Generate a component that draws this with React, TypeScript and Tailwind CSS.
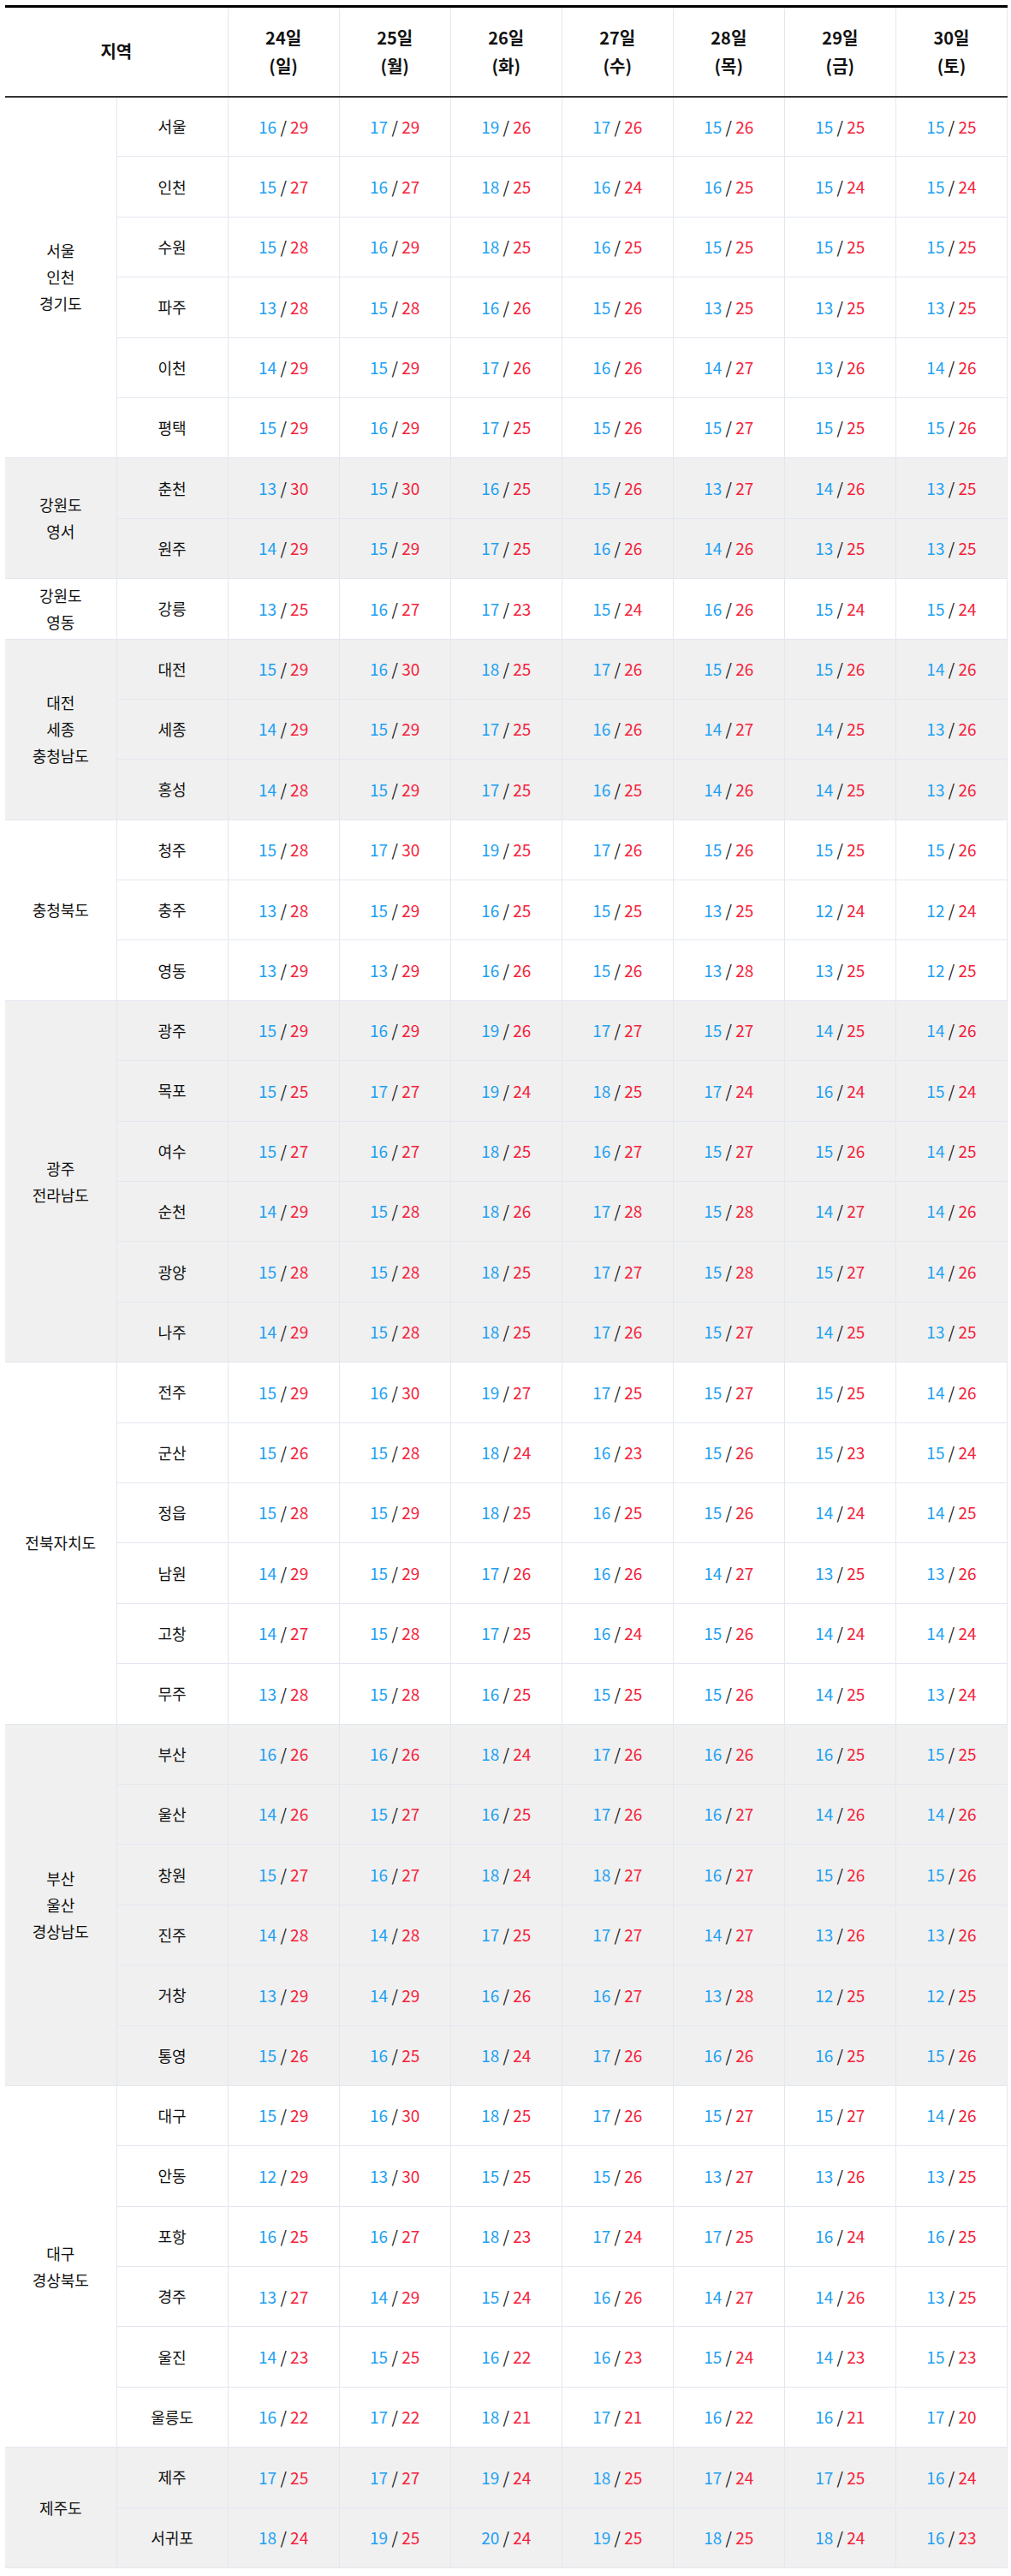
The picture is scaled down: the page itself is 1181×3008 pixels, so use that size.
import React from 'react'

type City = { name: string; temps: [number, number][] }
type Group = { region: string[]; cities: City[] }

const DAYS = [
  { date: '24일', dow: '(일)' },
  { date: '25일', dow: '(월)' },
  { date: '26일', dow: '(화)' },
  { date: '27일', dow: '(수)' },
  { date: '28일', dow: '(목)' },
  { date: '29일', dow: '(금)' },
  { date: '30일', dow: '(토)' },
]

// "16/29 17/29 ..." -> [[16,29],[17,29],...]
function t(s: string): [number, number][] {
  return s.split(' ').map((p) => {
    const [lo, hi] = p.split('/')
    return [Number(lo), Number(hi)]
  })
}

const GROUPS: Group[] = [
  {
    region: ['서울', '인천', '경기도'],
    cities: [
      { name: '서울', temps: t('16/29 17/29 19/26 17/26 15/26 15/25 15/25') },
      { name: '인천', temps: t('15/27 16/27 18/25 16/24 16/25 15/24 15/24') },
      { name: '수원', temps: t('15/28 16/29 18/25 16/25 15/25 15/25 15/25') },
      { name: '파주', temps: t('13/28 15/28 16/26 15/26 13/25 13/25 13/25') },
      { name: '이천', temps: t('14/29 15/29 17/26 16/26 14/27 13/26 14/26') },
      { name: '평택', temps: t('15/29 16/29 17/25 15/26 15/27 15/25 15/26') },
    ],
  },
  {
    region: ['강원도', '영서'],
    cities: [
      { name: '춘천', temps: t('13/30 15/30 16/25 15/26 13/27 14/26 13/25') },
      { name: '원주', temps: t('14/29 15/29 17/25 16/26 14/26 13/25 13/25') },
    ],
  },
  {
    region: ['강원도', '영동'],
    cities: [{ name: '강릉', temps: t('13/25 16/27 17/23 15/24 16/26 15/24 15/24') }],
  },
  {
    region: ['대전', '세종', '충청남도'],
    cities: [
      { name: '대전', temps: t('15/29 16/30 18/25 17/26 15/26 15/26 14/26') },
      { name: '세종', temps: t('14/29 15/29 17/25 16/26 14/27 14/25 13/26') },
      { name: '홍성', temps: t('14/28 15/29 17/25 16/25 14/26 14/25 13/26') },
    ],
  },
  {
    region: ['충청북도'],
    cities: [
      { name: '청주', temps: t('15/28 17/30 19/25 17/26 15/26 15/25 15/26') },
      { name: '충주', temps: t('13/28 15/29 16/25 15/25 13/25 12/24 12/24') },
      { name: '영동', temps: t('13/29 13/29 16/26 15/26 13/28 13/25 12/25') },
    ],
  },
  {
    region: ['광주', '전라남도'],
    cities: [
      { name: '광주', temps: t('15/29 16/29 19/26 17/27 15/27 14/25 14/26') },
      { name: '목포', temps: t('15/25 17/27 19/24 18/25 17/24 16/24 15/24') },
      { name: '여수', temps: t('15/27 16/27 18/25 16/27 15/27 15/26 14/25') },
      { name: '순천', temps: t('14/29 15/28 18/26 17/28 15/28 14/27 14/26') },
      { name: '광양', temps: t('15/28 15/28 18/25 17/27 15/28 15/27 14/26') },
      { name: '나주', temps: t('14/29 15/28 18/25 17/26 15/27 14/25 13/25') },
    ],
  },
  {
    region: ['전북자치도'],
    cities: [
      { name: '전주', temps: t('15/29 16/30 19/27 17/25 15/27 15/25 14/26') },
      { name: '군산', temps: t('15/26 15/28 18/24 16/23 15/26 15/23 15/24') },
      { name: '정읍', temps: t('15/28 15/29 18/25 16/25 15/26 14/24 14/25') },
      { name: '남원', temps: t('14/29 15/29 17/26 16/26 14/27 13/25 13/26') },
      { name: '고창', temps: t('14/27 15/28 17/25 16/24 15/26 14/24 14/24') },
      { name: '무주', temps: t('13/28 15/28 16/25 15/25 15/26 14/25 13/24') },
    ],
  },
  {
    region: ['부산', '울산', '경상남도'],
    cities: [
      { name: '부산', temps: t('16/26 16/26 18/24 17/26 16/26 16/25 15/25') },
      { name: '울산', temps: t('14/26 15/27 16/25 17/26 16/27 14/26 14/26') },
      { name: '창원', temps: t('15/27 16/27 18/24 18/27 16/27 15/26 15/26') },
      { name: '진주', temps: t('14/28 14/28 17/25 17/27 14/27 13/26 13/26') },
      { name: '거창', temps: t('13/29 14/29 16/26 16/27 13/28 12/25 12/25') },
      { name: '통영', temps: t('15/26 16/25 18/24 17/26 16/26 16/25 15/26') },
    ],
  },
  {
    region: ['대구', '경상북도'],
    cities: [
      { name: '대구', temps: t('15/29 16/30 18/25 17/26 15/27 15/27 14/26') },
      { name: '안동', temps: t('12/29 13/30 15/25 15/26 13/27 13/26 13/25') },
      { name: '포항', temps: t('16/25 16/27 18/23 17/24 17/25 16/24 16/25') },
      { name: '경주', temps: t('13/27 14/29 15/24 16/26 14/27 14/26 13/25') },
      { name: '울진', temps: t('14/23 15/25 16/22 16/23 15/24 14/23 15/23') },
      { name: '울릉도', temps: t('16/22 17/22 18/21 17/21 16/22 16/21 17/20') },
    ],
  },
  {
    region: ['제주도'],
    cities: [
      { name: '제주', temps: t('17/25 17/27 19/24 18/25 17/24 17/25 16/24') },
      { name: '서귀포', temps: t('18/24 19/25 20/24 19/25 18/25 18/24 16/23') },
    ],
  },
]

function Temp({ lo, hi }: { lo: number; hi: number }) {
  return (
    <span className="whitespace-nowrap text-[19px]">
      <span className="text-[#1da1f2]">{lo}</span>
      <span className="text-[#111]"> / </span>
      <span className="text-[#f5223b]">{hi}</span>
    </span>
  )
}

export default function App() {
  return (
    <div
      className="bg-white pt-[6px] pl-[6px]"
      style={{ fontFamily: '"Noto Sans CJK KR", "Noto Sans", sans-serif' }}
    >
      <table className="w-[1171px] table-fixed border-collapse text-[18px] text-[#111]">
        <colgroup>
          <col className="w-[130px]" />
          <col className="w-[130px]" />
          {DAYS.map((d) => (
            <col key={d.date} className="w-[130px]" />
          ))}
        </colgroup>
        <thead>
          <tr className="border-t-[3px] border-b-2 border-t-black border-b-[#333]">
            <th colSpan={2} className="h-[105px] text-center text-[20px] font-bold">
              지역
            </th>
            {DAYS.map((d) => (
              <th
                key={d.date}
                className="border-l border-r border-l-[#e3e7ef] border-r-[#e3e7ef] text-center text-[20px] font-bold leading-[33px]"
              >
                <div>{d.date}</div>
                <div>{d.dow}</div>
              </th>
            ))}
          </tr>
        </thead>
        <tbody>
          {GROUPS.map((g, gi) => {
            const bg = gi % 2 === 1 ? 'bg-[#f0f0f0]' : 'bg-white'
            return g.cities.map((c, ci) => (
              <tr key={`${gi}-${c.name}`} className={`${bg} border-b border-b-[#e3e7ef]`}>
                {ci === 0 ? (
                  <td
                    rowSpan={g.cities.length}
                    className="border-r border-r-[#e3e7ef] text-center leading-[31px]"
                  >
                    {g.region.map((r) => (
                      <div key={r}>{r}</div>
                    ))}
                  </td>
                ) : null}
                <td className="h-[70.4px] border-r border-r-[#e3e7ef] text-center">{c.name}</td>
                {c.temps.map(([lo, hi], di) => (
                  <td key={di} className="border-r border-r-[#e3e7ef] text-center">
                    <Temp lo={lo} hi={hi} />
                  </td>
                ))}
              </tr>
            ))
          })}
        </tbody>
      </table>
    </div>
  )
}
